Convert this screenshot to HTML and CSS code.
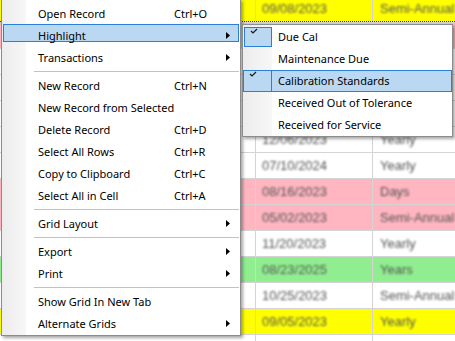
FILE: index.html
```html
<!DOCTYPE html>
<html lang="en">

<head>
    <meta charset="UTF-8">
    <meta name="viewport" content="width=device-width, initial-scale=1.0">
    <title>Grid context menu</title>
    <link rel="stylesheet" href="styles.css">
</head>

<body>

    <div class="grid">
        <div class="row yellow first">
            <div class="c1"></div>
            <div class="c2"><span>09/08/2023</span></div>
            <div class="c3"><span>Semi-Annual</span></div>
        </div>
        <!-- rows under the submenu -->
        <div class="row pink">
            <div class="c1"></div>
            <div class="c2"></div>
            <div class="c3"></div>
        </div>
        <div class="row">
            <div class="c1"></div>
            <div class="c2"></div>
            <div class="c3"></div>
        </div>
        <div class="row">
            <div class="c1"></div>
            <div class="c2"></div>
            <div class="c3"></div>
        </div>
        <div class="row">
            <div class="c1"></div>
            <div class="c2"></div>
            <div class="c3"></div>
        </div>
        <div class="row">
            <div class="c1"></div>
            <div class="c2"><span>12/06/2023</span></div>
            <div class="c3"><span>Yearly</span></div>
        </div>
        <div class="row">
            <div class="c1"></div>
            <div class="c2"><span>07/10/2024</span></div>
            <div class="c3"><span>Yearly</span></div>
        </div>
        <div class="row pink">
            <div class="c1"></div>
            <div class="c2"><span>08/16/2023</span></div>
            <div class="c3"><span>Days</span></div>
        </div>
        <div class="row pink">
            <div class="c1"></div>
            <div class="c2"><span>05/02/2023</span></div>
            <div class="c3"><span>Semi-Annual</span></div>
        </div>
        <div class="row">
            <div class="c1"></div>
            <div class="c2"><span>11/20/2023</span></div>
            <div class="c3"><span>Yearly</span></div>
        </div>
        <div class="row green">
            <div class="c1"></div>
            <div class="c2"><span>08/23/2025</span></div>
            <div class="c3"><span>Years</span></div>
        </div>
        <div class="row">
            <div class="c1"></div>
            <div class="c2"><span>10/25/2023</span></div>
            <div class="c3"><span>Semi-Annual</span></div>
        </div>
        <div class="row yellow">
            <div class="c1"></div>
            <div class="c2"><span>09/05/2023</span></div>
            <div class="c3"><span>Yearly</span></div>
        </div>
        <div class="row last">
            <div class="c1"></div>
            <div class="c2"></div>
            <div class="c3"></div>
        </div>
    </div>

    <!-- context menu -->
    <div class="menu main">
        <div class="item"><span>Open Record</span><span>Ctrl+O</span></div>
        <div class="item hl"><span>Highlight</span><span></span><svg class="arrow" width="4" height="7" viewBox="0 0 4 7"><path d="M0 0L4 3.5L0 7Z"/></svg></div>
        <div class="item"><span>Transactions</span><span></span><svg class="arrow" width="4" height="7" viewBox="0 0 4 7"><path d="M0 0L4 3.5L0 7Z"/></svg></div>
        <div class="sep"></div>
        <div class="item"><span>New Record</span><span>Ctrl+N</span></div>
        <div class="item"><span>New Record from Selected</span></div>
        <div class="item"><span>Delete Record</span><span>Ctrl+D</span></div>
        <div class="item"><span>Select All Rows</span><span>Ctrl+R</span></div>
        <div class="item"><span>Copy to Clipboard</span><span>Ctrl+C</span></div>
        <div class="item"><span>Select All in Cell</span><span>Ctrl+A</span></div>
        <div class="sep"></div>
        <div class="item"><span>Grid Layout</span><span></span><svg class="arrow" width="4" height="7" viewBox="0 0 4 7"><path d="M0 0L4 3.5L0 7Z"/></svg></div>
        <div class="sep"></div>
        <div class="item"><span>Export</span><span></span><svg class="arrow" width="4" height="7" viewBox="0 0 4 7"><path d="M0 0L4 3.5L0 7Z"/></svg></div>
        <div class="item"><span>Print</span><span></span><svg class="arrow" width="4" height="7" viewBox="0 0 4 7"><path d="M0 0L4 3.5L0 7Z"/></svg></div>
        <div class="sep"></div>
        <div class="item"><span>Show Grid In New Tab</span></div>
        <div class="item"><span>Alternate Grids</span><span></span><svg class="arrow" width="4" height="7" viewBox="0 0 4 7"><path d="M0 0L4 3.5L0 7Z"/></svg></div>
    </div>

    <!-- highlight submenu -->
    <div class="menu sub">
        <div class="item"><div class="check on"><svg class="tick" width="8" height="6" viewBox="0 0 8 6"><path d="M1 3L3 5L7 1"/></svg></div><span>Due Cal</span></div>
        <div class="item"><div class="check"></div><span>Maintenance Due</span></div>
        <div class="item hl"><div class="check on"><svg class="tick" width="8" height="6" viewBox="0 0 8 6"><path d="M1 3L3 5L7 1"/></svg></div><span>Calibration Standards</span></div>
        <div class="item"><div class="check"></div><span>Received Out of Tolerance</span></div>
        <div class="item"><div class="check"></div><span>Received for Service</span></div>
    </div>

</body>

</html>
```

FILE: styles.css
```css
body {
    margin: 0;
    padding: 0;
    background-color: #ffffff;
    position: relative;
    height: 341px;
    overflow: hidden;
}

/* grid behind the menu */
.grid {
    margin-top: -4px;
    font-family: "Liberation Sans", Arial, sans-serif;
    font-size: 13px;
}
.row {
    display: flex;
    height: 26px;
    box-sizing: border-box;
    border-top: 1px solid #d4d4d4;
    background-color: #ffffff;
}
.row.first {
    border-top: none;
    border-bottom: 1px dotted #333333;
}
.row.last {
    height: 7px;
}
.yellow { background-color: #ffff00; }
.pink { background-color: #ffb6c1; }
.green { background-color: #90ee90; }

.c1, .c2, .c3 {
    box-sizing: border-box;
    display: flex;
    align-items: center;
}
.c1 {
    width: 256px;
    border-right: 1px solid #d4d4d4;
}
.c2 {
    width: 117px;
    padding-left: 6px;
    border-right: 1px solid #d4d4d4;
}
.c3 {
    flex: 1;
    padding-left: 7px;
    white-space: nowrap;
}
.c2 span, .c3 span {
    display: inline-block;
    color: #555555;
    filter: blur(1.2px);
}

/* menus */
.menu {
    position: absolute;
    box-sizing: border-box;
    border: 1px solid #8c8c8c;
    background-color: #ffffff;
    background-image: linear-gradient(to right, #ececec, #f7f7f7);
    background-repeat: no-repeat;
    background-origin: padding-box;
    box-shadow: 2px 2px 3px rgba(0, 0, 0, 0.35);
    font-family: "Noto Sans", sans-serif;
    font-size: 11px;
    color: #000000;
    white-space: nowrap;
}
.main {
    left: 1px;
    top: -1px;
    width: 240px;
    padding: 2px 1px 1px 1px;
    background-size: 24px 100%;
}
.sub {
    left: 242px;
    top: 24px;
    width: 211px;
    padding: 1px 0 0 0;
    background-size: 29px 100%;
}

.main .item {
    display: grid;
    grid-template-columns: 136px 1fr auto;
    align-items: center;
    height: 22px;
    padding: 0 9px 0 35px;
    position: relative;
}
.main .item.hl {
    z-index: 0;
}
.main .item.hl::before {
    content: "";
    position: absolute;
    left: 0;
    top: 0;
    right: 0;
    height: 18px;
    box-sizing: border-box;
    border: 1px solid #2a7fd6;
    background-color: #bbd8f3;
    z-index: -1;
}
.arrow {
    display: block;
    fill: #000000;
}
.sep {
    height: 1px;
    background-color: #c2c2c2;
    margin: 3px 0 2px 31px;
}

.sub .item {
    display: flex;
    align-items: flex-start;
    height: 22px;
    line-height: 22px;
    box-sizing: border-box;
}
.check {
    flex: none;
    width: 28px;
    height: 20px;
    margin: 1px 6px 1px 1px;
    box-sizing: border-box;
}
.check.on {
    border: 1px solid #2a7fd6;
    background-color: #bbd8f3;
}
.sub .item.hl {
    border: 1px solid #2a7fd6;
    background-color: #bbd8f3;
    line-height: 20px;
}
.sub .item.hl .check {
    width: 29px;
    height: 22px;
    margin: -1px 6px -1px -1px;
}
.tick {
    display: block;
    margin-left: 5px;
}
.tick path {
    fill: none;
    stroke: #1a1a1a;
    stroke-width: 1.2;
}
```
